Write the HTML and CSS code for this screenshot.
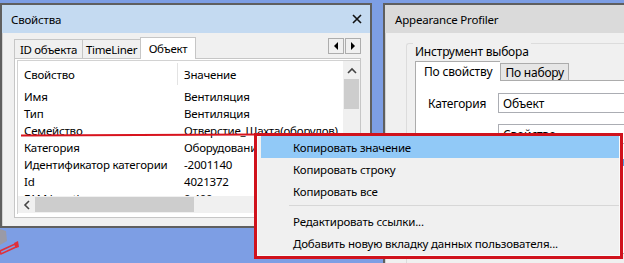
FILE: index.html
```html
<!DOCTYPE html>
<html lang="ru">
<head>
    <meta charset="UTF-8">
    <title>Свойства</title>
    <link rel="stylesheet" href="styles.css">
</head>
<body>
    <div class="desktop">
        <!-- Properties window -->
        <div class="win win-props">
            <div class="titlebar">
                <span>Свойства</span>
                <svg class="close" width="10" height="10" viewBox="0 0 10 10">
                    <path d="M1 1 L9 9 M9 1 L1 9" stroke="#111" stroke-width="1.6"/>
                </svg>
            </div>
            <div class="win-body">
                <div class="tabs-row">
                    <div class="tab tab-id">ID объекта</div>
                    <div class="tab tab-tl">TimeLiner</div>
                    <div class="tab tab-obj active">Объект</div>
                    <div class="tab-spacer"></div>
                    <div class="tab-scroll">
                        <div class="tab-btn"><span class="tri-left"></span></div>
                        <div class="tab-btn"><span class="tri-right"></span></div>
                    </div>
                </div>
                <div class="panel">
                    <div class="list">
                        <div class="list-main">
                            <div class="list-content">
                                <div class="list-head">
                                    <div class="col1">Свойство</div>
                                    <div class="col-sep"></div>
                                    <div class="col2">Значение</div>
                                </div>
                                <div class="rows">
                                    <div class="row"><div class="col1">Имя</div><div class="col2">Вентиляция</div></div>
                                    <div class="row"><div class="col1">Тип</div><div class="col2">Вентиляция</div></div>
                                    <div class="row"><div class="col1">Семейство</div><div class="col2">Отверстие_Шахта(оборудов)</div></div>
                                    <div class="row"><div class="col1">Категория</div><div class="col2">Оборудование</div></div>
                                    <div class="row"><div class="col1">Идентификатор категории</div><div class="col2">-2001140</div></div>
                                    <div class="row"><div class="col1">Id</div><div class="col2">4021372</div></div>
                                    <div class="row"><div class="col1">FAM length</div><div class="col2">0.400</div></div>
                                </div>
                            </div>
                            <div class="vscroll">
                                <div class="vscroll-up">
                                    <svg width="10" height="7" viewBox="0 0 10 7"><path d="M1 6 L5 2 L9 6" fill="none" stroke="#444" stroke-width="1.6"/></svg>
                                </div>
                                <div class="vscroll-thumb"></div>
                            </div>
                        </div>
                        <div class="hscroll">
                            <div class="hscroll-left">
                                <svg width="7" height="10" viewBox="0 0 7 10"><path d="M6 1 L2 5 L6 9" fill="none" stroke="#444" stroke-width="1.6"/></svg>
                            </div>
                            <div class="hscroll-thumb"></div>
                        </div>
                    </div>
                </div>
            </div>
        </div>

        <!-- Appearance Profiler window -->
        <div class="win win-profiler">
            <div class="titlebar titlebar-gray">
                <span>Appearance Profiler</span>
            </div>
            <div class="win-body profiler-body">
                <div class="group">
                    <div class="group-label">Инструмент выбора</div>
                    <div class="ptabs">
                        <div class="ptab active">По свойству</div>
                        <div class="ptab">По набору</div>
                    </div>
                    <div class="ppanel">
                        <div class="field">
                            <div class="field-label">Категория</div>
                            <div class="input">Объект</div>
                        </div>
                        <div class="field">
                            <div class="field-label"></div>
                            <div class="input">Свойство</div>
                        </div>
                        <div class="field field-last">
                            <div class="field-label"></div>
                            <div class="input">Равно р</div>
                        </div>
                    </div>
                </div>
            </div>
        </div>
    </div>

    <!-- red marker in the 3D view -->
    <svg class="scene-obj" width="24" height="30" viewBox="0 0 24 30">
        <path d="M0 0 L6 2 L7 12 L0 16 Z" fill="#9a9aa6"/>
        <path d="M0 22 L15 15 L16 18 L1 25 Z" fill="none" stroke="#e0303a" stroke-width="1.6"/>
        <path d="M14 14 L18 12 L19 18 L16 19 Z" fill="#e0303a"/>
    </svg>

    <!-- annotation -->
    <div class="mark-line"></div>

    <!-- context menu -->
    <div class="ctx-menu">
        <div class="ctx-item hover">Копировать значение</div>
        <div class="ctx-item">Копировать строку</div>
        <div class="ctx-item">Копировать все</div>
        <div class="ctx-sep"></div>
        <div class="ctx-item">Редактировать ссылки...</div>
        <div class="ctx-item">Добавить новую вкладку данных пользователя...</div>
    </div>
</body>
</html>
```

FILE: styles.css
```css
body {
    margin: 0;
    width: 624px;
    height: 263px;
    overflow: hidden;
    background-color: #7d9ee4;
    font-family: "Noto Sans", "Open Sans", sans-serif;
    font-size: 11.5px;
    letter-spacing: -0.2px;
    color: #000;
    position: relative;
}

.desktop {
    display: flex;
    gap: 11px;
    padding-top: 3px;
}

/* windows */
.win {
    border: 2px solid #5f5f5f;
    background-color: #e6e6e6;
    box-sizing: border-box;
    flex-shrink: 0;
}

.win-props {
    width: 372px;
    height: 225px;
}

.win-profiler {
    width: 260px;
    height: 262px;
}

.titlebar {
    height: 28px;
    background-color: #c4daf1;
    display: flex;
    align-items: center;
    justify-content: space-between;
    padding: 0 8px 0 9px;
}

.titlebar-gray {
    background-color: #dadada;
    padding-left: 10px;
}

.win-body {
    padding: 3px 9px 8px 11px;
    background-color: #f0f0f0;
    border-left: 1px solid #d2d2d2;
}

/* tabs of the properties window */
.tabs-row {
    display: flex;
    align-items: flex-end;
    height: 22px;
}

.tab {
    height: 18px;
    border: 1px solid #c6c6c6;
    border-bottom: none;
    background-color: #f0f0f0;
    display: flex;
    align-items: center;
    justify-content: center;
    margin-right: -1px;
    letter-spacing: -0.3px;
}

.tab-id {
    width: 67px;
}

.tab-tl {
    width: 57px;
}

.tab-obj {
    width: 54px;
}

.tab.active {
    height: 21px;
    background-color: #fff;
    position: relative;
    z-index: 1;
    margin-bottom: -1px;
}

.tab-spacer {
    flex: 1;
}

.tab-scroll {
    display: flex;
    gap: 1px;
    align-self: flex-start;
    margin-top: 2px;
}

.tab-btn {
    width: 14px;
    height: 14px;
    border: 1px solid #adadad;
    background-color: #f0f0f0;
    display: flex;
    align-items: center;
    justify-content: center;
}

.tri-left {
    border-style: solid;
    border-width: 4px 4px 4px 0;
    border-color: transparent #000 transparent transparent;
}

.tri-right {
    border-style: solid;
    border-width: 4px 0 4px 4px;
    border-color: transparent transparent transparent #000;
}

.panel {
    height: 160px;
    box-sizing: border-box;
    border: 1px solid #c6c6c6;
    background-color: #fff;
    padding: 1px 0 0 2px;
}

.list {
    border-left: 1px solid #d2d2d2;
    border-top: 1px solid #d2d2d2;
    height: 153px;
    display: flex;
    flex-direction: column;
}

.list-main {
    display: flex;
    height: 135px;
}

.list-content {
    flex: 1;
    overflow: hidden;
}

.list-head {
    display: flex;
    height: 26px;
    align-items: center;
}

.list-head .col-sep {
    width: 1px;
    height: 22px;
    background-color: #e3e3e3;
    margin-left: -7px;
    margin-right: 6px;
}

.col1 {
    width: 160px;
    padding-left: 6px;
    flex-shrink: 0;
}

.col2 {
    white-space: nowrap;
}

.rows {
    padding-top: 1px;
}

.row {
    display: flex;
    height: 17px;
    align-items: center;
    white-space: nowrap;
}

.vscroll {
    width: 17px;
    background-color: #f0f0f0;
    flex-shrink: 0;
}

.vscroll-up {
    height: 18px;
    display: flex;
    align-items: center;
    justify-content: center;
}

.vscroll-thumb {
    margin: 0 1px;
    height: 30px;
    background-color: #cdcdcd;
}

.hscroll {
    height: 17px;
    background-color: #f0f0f0;
    display: flex;
    align-items: center;
}

.hscroll-left {
    width: 17px;
    display: flex;
    justify-content: center;
}

.hscroll-thumb {
    width: 159px;
    height: 15px;
    background-color: #cdcdcd;
}

/* appearance profiler */
.profiler-body {
    height: 230px;
    padding: 3px 0 0 20px;
}

.group {
    border: 1px solid #dcdcdc;
    border-right: none;
    border-radius: 3px 0 0 0;
    height: 220px;
    margin-top: 7px;
    padding: 0 0 0 8px;
}

.group-label {
    background-color: #f0f0f0;
    display: inline-block;
    padding: 0 2px;
    margin-top: -9px;
    margin-left: -2px;
    font-size: 12px;
}

.ptabs {
    display: flex;
    align-items: flex-end;
    height: 20px;
}

.ptab {
    height: 16px;
    padding: 0 4px;
    border: 1px solid #acacac;
    border-bottom: none;
    background-color: #e6e6e6;
    display: flex;
    align-items: center;
    font-size: 12px;
}

.ptab.active {
    height: 19px;
    background-color: #fff;
    padding: 0 8px;
    margin-bottom: -1px;
    position: relative;
    z-index: 1;
    border-right: none;
}

.ppanel {
    border: 1px solid #acacac;
    border-right: none;
    background-color: #fff;
    height: 160px;
    padding-top: 12px;
}

.field {
    display: flex;
    align-items: center;
    margin-bottom: 11px;
}

.field-last {
    margin-top: -4px;
}

.field-label {
    width: 82px;
    padding-left: 12px;
    box-sizing: border-box;
    font-size: 12px;
}

.input {
    flex: 1;
    height: 18px;
    border: 1px solid #abadb3;
    border-right: none;
    padding-left: 4px;
    display: flex;
    align-items: center;
    font-size: 12px;
}

.field-last .input {
    justify-content: flex-end;
    border-color: transparent;
}

/* scene */
.scene-obj {
    position: absolute;
    left: 0;
    top: 229px;
}

/* annotation line */
.mark-line {
    position: absolute;
    left: 21px;
    top: 134px;
    width: 236px;
    height: 2px;
    background-color: #d8141e;
    transform: rotate(-0.3deg);
}

/* context menu */
.ctx-menu {
    position: absolute;
    left: 254px;
    top: 133px;
    width: 358px;
    height: 120px;
    border: 3px solid #d0121c;
    background-color: #f0f0f0;
    padding: 0 1px 0 4px;
    box-shadow: inset 0 0 0 1px #fafafa;
}

.ctx-item {
    height: 22px;
    display: flex;
    align-items: center;
    padding-left: 32px;
}

.ctx-item.hover {
    background-color: #91c9f7;
}

.ctx-sep {
    height: 1px;
    background-color: #d7d7d7;
    margin: 3px 0 4px 28px;
}
```
